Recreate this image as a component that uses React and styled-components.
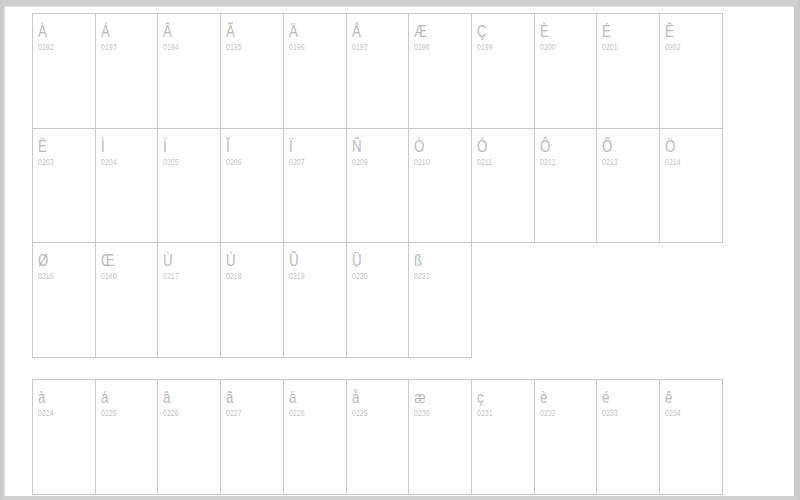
import React from "react";
import styled, { createGlobalStyle } from "styled-components";

const Global = createGlobalStyle`
  html, body { margin: 0; padding: 0; background: #fff; }
  body { font-family: "Liberation Sans", Arial, sans-serif; }
`;

const Frame = styled.div`
  box-sizing: border-box;
  width: 800px;
  height: 500px;
  overflow: hidden;
  background: #fff;
  border-style: solid;
  border-color: #cfcfcf #cbcbcb #d0d0d0 #cbcbcb;
  border-width: 6px 6px 4px 4px;
  box-shadow: inset 1px 1px 0 #e4e4e4;
  padding: 7px 0 0 28px;
  display: flex;
  flex-direction: column;
  gap: 21px;
`;

const Grid = styled.div`
  display: grid;
  grid-template-columns: 63.73px repeat(10, 62.73px);
  grid-auto-rows: 114.67px;
  grid-template-rows: 115.67px;
  flex-shrink: 0;
`;

const Cell = styled.div`
  box-sizing: border-box;
  border-right: 1px solid #c9c9c9;
  border-bottom: 1px solid #c9c9c9;
  border-left: ${(p) => (p.$firstCol ? "1px solid #c9c9c9" : "none")};
  border-top: ${(p) => (p.$firstRow ? "1px solid #c9c9c9" : "none")};
  padding: 9px 0 0 5px;
  display: flex;
  flex-direction: column;
  align-items: flex-start;
`;

const Glyph = styled.span`
  display: inline-block;
  font-size: 17px;
  line-height: 17px;
  color: #b9b9b9;
  transform: scaleX(0.78);
  transform-origin: left center;
`;

const Code = styled.span`
  display: inline-block;
  margin-top: 3px;
  font-size: 8.5px;
  line-height: 8px;
  color: #c4c4c4;
  transform: scaleX(0.82);
  transform-origin: left center;
`;

const upper = [192, 193, 194, 195, 196, 197, 198, 199, 200, 201, 202, 203, 204, 205, 206, 207, 209, 210, 211, 212, 213, 214, 216, 140, 217, 218, 219, 220, 223];
const lower = [224, 225, 226, 227, 228, 229, 230, 231, 232, 233, 234];

const cp1252 = { 140: 0x152, 156: 0x153 };
const charOf = (c) => String.fromCodePoint(cp1252[c] || c);
const pad = (c) => String(c).padStart(4, "0");

function CharGrid({ codes }) {
  return (
    <Grid>
      {codes.map((c, i) => (
        <Cell key={c} $firstCol={i % 11 === 0} $firstRow={i < 11}>
          <Glyph>{charOf(c)}</Glyph>
          <Code>{pad(c)}</Code>
        </Cell>
      ))}
    </Grid>
  );
}

export default function App() {
  return (
    <>
      <Global />
      <Frame>
        <CharGrid codes={upper} />
        <CharGrid codes={lower} />
      </Frame>
    </>
  );
}
